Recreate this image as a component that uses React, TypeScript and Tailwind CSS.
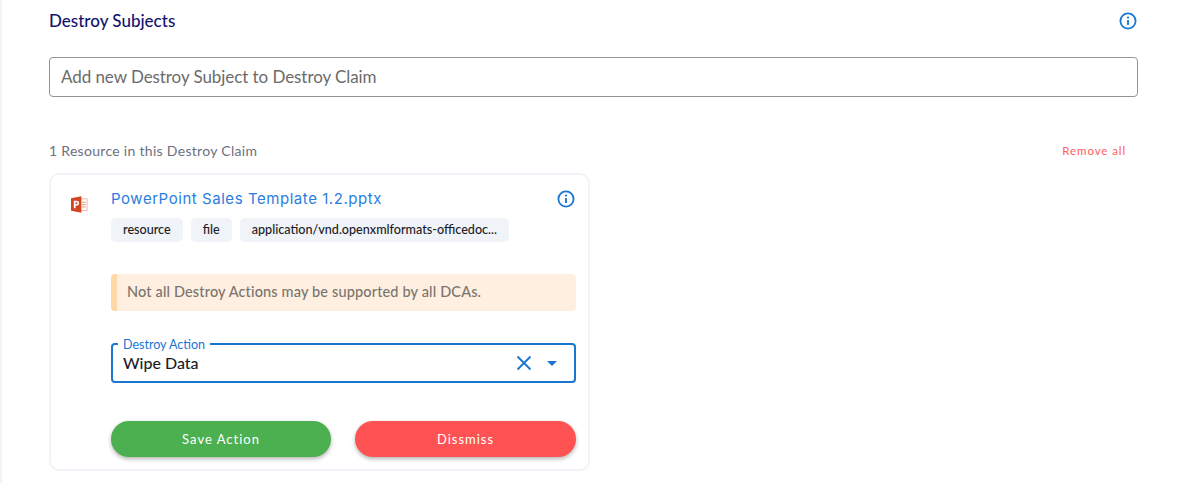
import React from 'react';

const sans = "font-['Lato','Noto_Sans',sans-serif]";

const InfoIcon = () => (
  <svg width="18" height="18" viewBox="0 0 18 18" fill="none" className="block">
    <circle cx="9" cy="9" r="7.6" stroke="#1976d2" strokeWidth="1.8" />
    <circle cx="9" cy="5.6" r="1.1" fill="#1976d2" />
    <rect x="8.05" y="7.9" width="1.9" height="5" rx="0.5" fill="#1976d2" />
  </svg>
);

const PptIcon = () => (
  <svg width="17" height="17" viewBox="0 0 18 18" className="block">
    <rect x="7" y="3" width="10" height="12.5" fill="#fff" stroke="#eeb5a6" strokeWidth="1" />
    <rect x="11.5" y="6" width="4" height="1.2" fill="#e9a48f" />
    <rect x="11.5" y="8.5" width="4" height="1.2" fill="#e9a48f" />
    <rect x="11.5" y="11" width="4" height="1.2" fill="#e9a48f" />
    <path d="M0 2.4 L11 0.3 V17.7 L0 15.6 Z" fill="#d2451f" />
    <path d="M3 13 V5 H6 a2.6 2.6 0 0 1 0 5.2 H4.8 V13 Z M4.8 6.6 V8.7 H5.8 a1.05 1.05 0 0 0 0 -2.1 Z" fill="#fff" />
  </svg>
);

const Chip = ({ label }: { label: string }) => (
  <span className="flex h-6 items-center rounded-[5px] bg-[#f0f3f7] px-3 text-[12.6px] font-medium text-[#1c1c28]">
    {label}
  </span>
);

export default function App() {
  return (
    <div className={`${sans} h-[483px] w-[1180px] overflow-hidden border-l-2 border-[#f0f3f7] bg-white pl-[47px] pr-[42px]`}>
      <div className="flex h-[42px] items-center justify-between pr-[1px]">
        <h2 className="text-[17px] font-medium text-[#14146e]">Destroy Subjects</h2>
        <InfoIcon />
      </div>

      <div className="mt-[15px] flex h-10 items-center rounded-[4px] border border-[#949494] pl-[11px] pr-3 text-[17px] tracking-[-0.07px] text-[#6b6b6b]">
        Add new Destroy Subject to Destroy Claim
      </div>

      <div className="mt-[44px] flex h-5 items-center justify-between pr-[12px]">
        <span className="pb-[2px] text-[14px] font-normal tracking-[0.3px] text-[#6c6f80]">1 Resource in this Destroy Claim</span>
        <button className="text-[11.5px] font-normal tracking-[0.9px] text-[#ff5c5c]">Remove all</button>
      </div>

      <div className="mt-[12px] h-[298px] w-[541px] rounded-[10px] border-2 border-[#f0f3f7] pl-[18px] pr-[12px]">
        <div className="flex pt-[3px]">
          <div className="w-[42px] pl-[2px] pt-[18px]">
            <PptIcon />
          </div>
          <div className="min-w-0 flex-1">
            <div className="flex h-10 items-center justify-between pr-[1px] pt-[2px]">
              <span className="font-['Inter',sans-serif] text-[15px] tracking-[0.55px] text-[#2b7de0]">PowerPoint Sales Template 1.2.pptx</span>
              <InfoIcon />
            </div>
            <div className="flex gap-2">
              <Chip label="resource" />
              <Chip label="file" />
              <Chip label="application/vnd.openxmlformats-officedoc..." />
            </div>

            <div className="mt-[32px] flex h-[37px] items-center rounded-[4px] border-l-[6px] border-[#ffd7a8] bg-[#ffefe0] pb-[2px] pl-[10px] text-[14.5px] font-medium tracking-[0.15px] text-[#7a756f]">
              Not all Destroy Actions may be supported by all DCAs.
            </div>

            <div className="relative mt-[32px] flex h-10 items-center rounded-[4px] border-2 border-[#1976d2] pl-[10px] pr-[17px]">
              <span className="absolute -top-[6px] left-[5px] bg-white px-[5px] text-[12.5px] leading-[12px] text-[#1976d2]">
                Destroy Action
              </span>
              <span className="flex-1 text-[16px] font-medium text-[#1c1c28]">Wipe Data</span>
              <svg width="16" height="16" viewBox="0 0 16 16" className="mr-[15px]" fill="none">
                <path d="M1.5 1.5 L14.5 14.5 M14.5 1.5 L1.5 14.5" stroke="#1976d2" strokeWidth="1.9" />
              </svg>
              <svg width="10" height="5" viewBox="0 0 10 5">
                <path d="M0 0 H10 L5 5 Z" fill="#1976d2" />
              </svg>
            </div>

            <div className="mt-[38px] flex gap-[24px]">
              <button className="h-9 w-[220px] rounded-full bg-[#4caf50] pt-[2px] text-[13px] font-normal tracking-[1px] text-white shadow-[0_2px_4px_rgba(0,0,0,0.3)]">
                Save Action
              </button>
              <button className="h-9 flex-1 rounded-full bg-[#ff5252] pt-[2px] text-[13px] font-normal tracking-[1px] text-white shadow-[0_2px_4px_rgba(0,0,0,0.3)]">
                Dissmiss
              </button>
            </div>
          </div>
        </div>
      </div>
    </div>
  );
}
